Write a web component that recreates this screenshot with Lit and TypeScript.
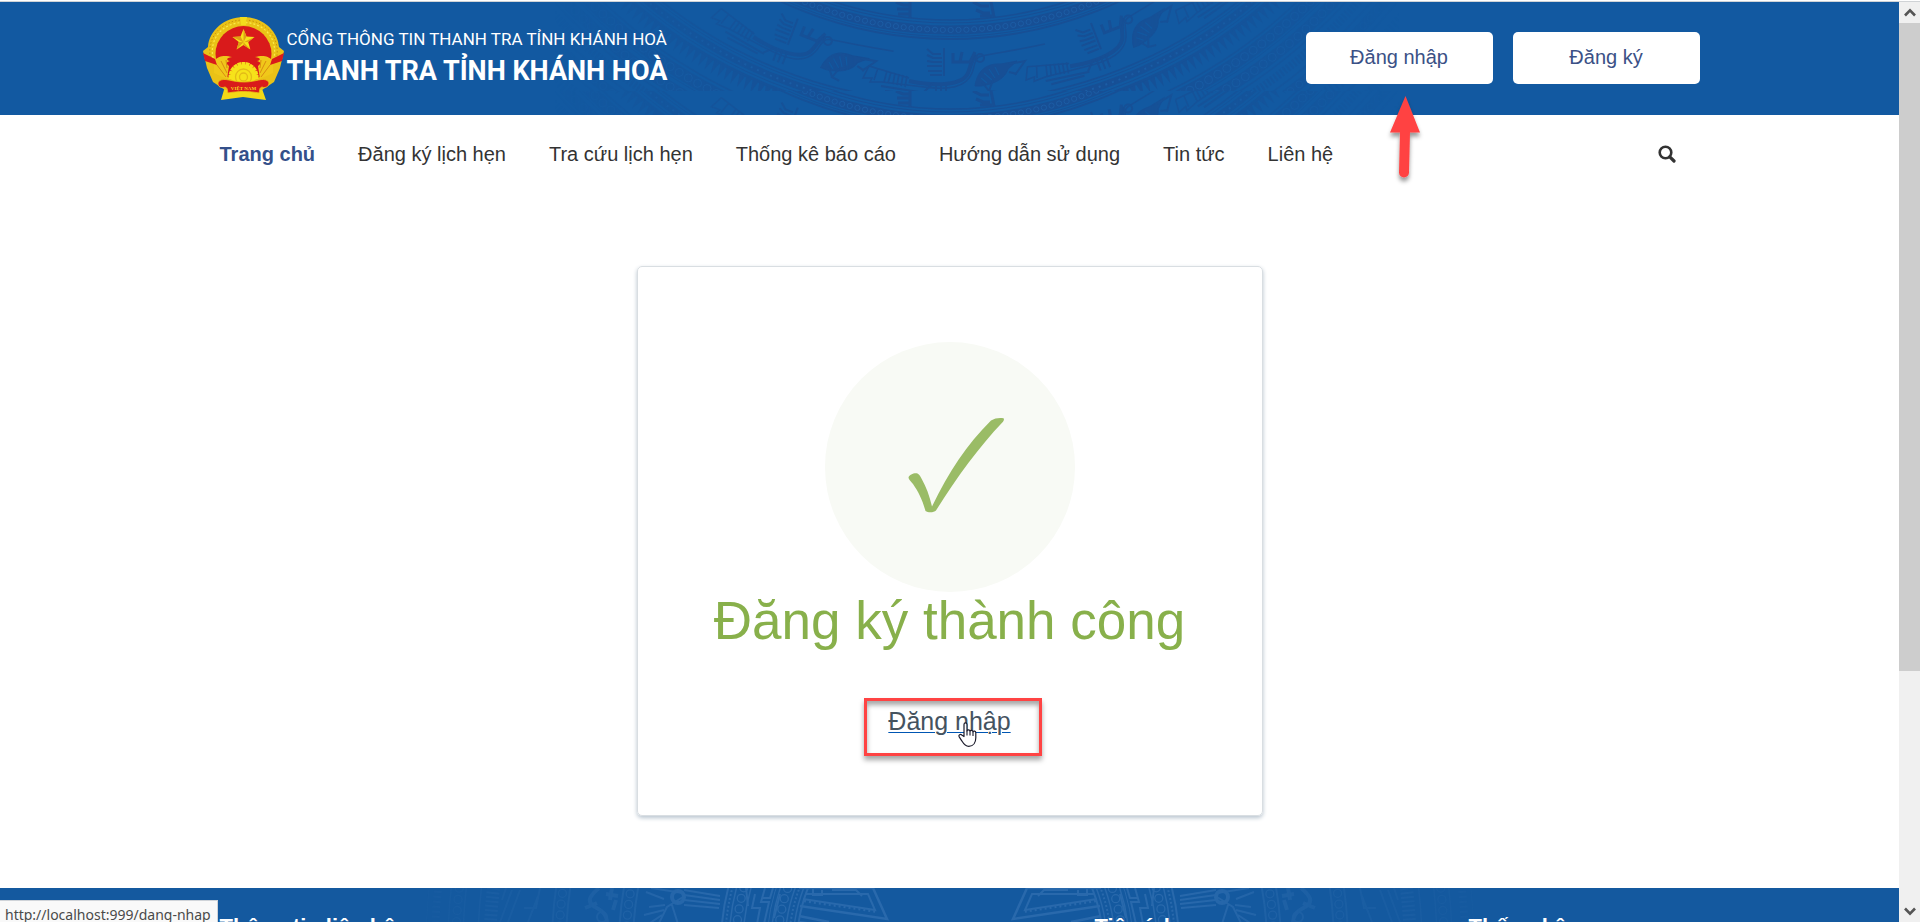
import { LitElement, html, svg, css } from "lit";
import { customElement } from "lit/decorators.js";
import { classMap } from "lit/directives/class-map.js";

const polar = (cx: number, cy: number, r: number, deg: number) => {
  const a = (deg * Math.PI) / 180;
  return [cx + r * Math.sin(a), cy + r * Math.cos(a)];
};
const range = (from: number, to: number, step: number) => {
  const out: number[] = [];
  for (let v = from; v <= to; v += step) out.push(v);
  return out;
};

/* Bronze-drum ornament behind the top banner */
@customElement("drum-banner")
class DrumBanner extends LitElement {
  static styles = css`
    :host { display: block; overflow: hidden; }
    .art { display: block; margin: 0 auto; }
  `;
  private ring(r: number, w: number, dash = "") {
    return svg`<circle cx="450" cy="-363" r=${r} stroke-width=${w} stroke-dasharray=${dash || "none"}/>`;
  }
  private coils(r: number, size: number, step: number, color: string) {
    return range(-62, 62, step).map((d) => {
      const [x, y] = polar(450, -363, r, d);
      return svg`<circle cx=${x.toFixed(1)} cy=${y.toFixed(1)} r=${size} stroke=${color} stroke-width="1"/>`;
    });
  }
  private spikes(r: number, len: number, step: number) {
    const d = range(-62, 62, step)
      .map((a) => {
        const p = [polar(450, -363, r, a - step / 2.4), polar(450, -363, r + len, a), polar(450, -363, r, a + step / 2.4)];
        return "M" + p.map((q) => q.map((n) => n.toFixed(1)).join(" ")).join("L") + "z";
      })
      .join("");
    return svg`<path d=${d} fill="#174f95" stroke="none"/>`;
  }
  private crane(angle: number) {
    return svg`<g transform="rotate(${angle} 450 -363)">
      <path stroke-width="1.5" d="M369 64l-6 12h9l-2 4h12M369 64l40 12M378 66l-4 12M382 80l42 5c24 3 42 1 48-14 3-7 2-16 10-17 14-3 30-5 63-12"/>
      <path stroke-width="4" d="M409 79c28 6 54 4 59-8 3-7 3-13 8-18"/>
      <path stroke-width="1.6" d="M387 69l-3 11M391 70l-3 11M395 71l-2 11M399 72l-2 11M403 73l-2 11M407 74l-2 11"/>
      <path stroke-width="2" d="M444 46v28M427 47l6 5h8M427 53l6 3h9M427 59l6 1h9M427 64h15M428 69h14M430 73h12"/>
      <path stroke-width="3" d="M453 51v9h17l5-10M462 50l-2 10"/>
      <circle cx="480" cy="56" r="4" stroke-width="2"/>
      <path stroke-width="2" d="M381 84l44 7M385 89l34 4M424 90l8-8M436 82v12M441 82v12M446 82v12"/>
    </g>`;
  }
  private chick(angle: number) {
    return svg`<g transform="rotate(${angle} 450 -363)">
      <path fill="#174f95" stroke-width="1" d="M475 84c2-14 10-23 26-22l16-3-9 8c-3 10-14 15-27 17z"/>
      <path stroke-width="2" d="M509 62l16-3-10 14M509 70l8 2M482 80l7 9M493 78l-4 11 8 1"/>
      <path stroke="#1259a1" stroke-width="1.2" d="M481 76l6 5M484 71l8 7M489 67l6 9M495 65l4 8"/>
    </g>`;
  }
  render() {
    const light = "#1c5da5";
    return html`<svg class="art" width="900" height="113" viewBox="0 0 900 113" aria-hidden="true">
      <defs>
        <linearGradient id="fade">
          <stop offset="0" stop-color="#fff" stop-opacity="0"/><stop offset=".06" stop-color="#fff" stop-opacity="0"/>
          <stop offset=".22" stop-color="#fff" stop-opacity=".45"/><stop offset=".4" stop-color="#fff"/>
          <stop offset=".66" stop-color="#fff"/><stop offset=".82" stop-color="#fff" stop-opacity=".5"/>
          <stop offset="1" stop-color="#fff" stop-opacity="0"/>
        </linearGradient>
        <mask id="soft"><rect width="900" height="113" fill="url(#fade)"/></mask>
        <clipPath id="tile"><rect width="900" height="89"/></clipPath>
        <g id="drum" fill="none" stroke="#174f95" clip-path="url(#tile)">
          ${this.ring(381, 1.5)}${this.ring(384, 1)}${this.ring(391, 9)}${this.coils(391, 2.6, 1.15, light)}
          ${this.ring(397.5, 1)}${this.ring(400, 1.8)}
          ${this.ring(463, 1.6)}${this.ring(466, 1)}${this.ring(472, 7)}
          <circle cx="450" cy="-363" r="472" stroke=${light} stroke-width="2" stroke-dasharray="2 5"/>
          ${this.ring(478, 1)}${this.ring(482, 3)}${this.spikes(483, 13, 0.85)}
          ${this.ring(502, 1.5)}${this.ring(511, 12)}${this.coils(511, 4, 1.2, light)}
          ${this.ring(519, 1)}${this.ring(528, 11)}${this.coils(528, 4, 1.2, light)}${this.ring(537, 1.5)}
          ${this.ring(546, 8, "2 2")}${this.ring(556, 1.5)}${this.ring(566, 10)}${this.coils(566, 3.4, 1.1, light)}
          ${this.ring(576, 1.5)}${this.ring(590, 12, "2 3")}${this.ring(602, 2)}${this.ring(618, 10, "3 2")}
          ${this.crane(0)}${this.crane(21)}${this.crane(-21)}${this.crane(-42)}
          ${this.chick(0)}${this.chick(20)}${this.chick(-21)}
          <path stroke-width="3" d="M396 0l7 3h6M397 7h12M398 12h12M410 0v16M473 0l8 4h8M476 8l7 3h7M480 14h12M491 0l3 15"/>
        </g>
      </defs>
      <g mask="url(#soft)"><use href="#drum"/><use href="#drum" y="89"/></g>
    </svg>`;
  }
}

/* Lighter ornament behind the footer, drawn once and mirrored */
@customElement("footer-art")
class FooterArt extends LitElement {
  static styles = css`
    :host { display: block; overflow: hidden; }
    .art { display: block; margin: 0 auto; }
  `;
  private ring(r: number, w: number, dash = "none") {
    return svg`<circle cx="570" cy="57" r=${r} stroke-width=${w} stroke-dasharray=${dash}/>`;
  }
  private chain(r: number, size: number, step: number) {
    return range(-100, -60, step).map((d) => {
      const [x, y] = polar(570, 57, r, d - 20);
      return svg`<circle cx=${x.toFixed(1)} cy=${y.toFixed(1)} r=${size} stroke-width="1.3"/>`;
    });
  }
  render() {
    return html`<svg class="art" width="1140" height="90" viewBox="0 0 1140 90" aria-hidden="true">
      <defs>
        <linearGradient id="fade">
          <stop offset="0" stop-color="#fff" stop-opacity="0"/><stop offset=".35" stop-color="#fff" stop-opacity=".5"/>
          <stop offset=".6" stop-color="#fff"/>
          <stop offset="1" stop-color="#fff"/>
        </linearGradient>
        <mask id="soft"><rect width="570" height="90" fill="url(#fade)"/></mask>
        <g id="half" fill="none" stroke="#2969ac" mask="url(#soft)">
          ${this.ring(153, 2)}${this.ring(157, 1.5)}${this.ring(161, 2, "2 2")}${this.ring(165, 1.5)}
          ${this.chain(172, 4, 3.6)}${this.ring(179, 1.5)}${this.ring(183, 1)}
          <path stroke-width="2" d="M385 0l-4 14h8l-5 22M393 0l-3 10h-7M375 6l-3 14h8l-3 16M400 6l-6 24M366 0l2 18"/>
          ${this.ring(207, 1.5)}${this.chain(214, 4, 2.9)}${this.ring(221, 1.5)}${this.ring(225, 2, "2 2")}${this.ring(229, 2)}
          <path stroke-width="2.5" d="M419 0h74l14 31-87-13M419 28l30 6M419 34l14 2"/>
          <path stroke-width="2" d="M426 6h62l7 16-72-11M433 1v6h9V2M452 2h24l6 6"/>
          <path stroke-width="2.4" stroke-dasharray="2 3" d="M424 13l74 11"/>
          <path stroke-width="2" d="M340 8l-36-6M340 12l-36-5M340 16l-36-4M339 20l-35-3M303 5l-32-5M303 9l-16 10-8 16M292 17l6 19M285 17l-16 2M284 22l-20 5M282 27l-12 8M266 4l18 7"/>
          <circle cx="298" cy="9" r="6" stroke-width="4"/>
          <g opacity=".8">
            ${this.ring(317, 2)}${this.chain(324, 4, 1.9)}${this.ring(331, 2)}
            <path stroke-width="4" d="M219 0c-8 7-14 13-4 19 10 5 12 10 12 16M226 6l12 2M232 0l-2 12M236 12l-3 10M205 20l12-5"/>
            <circle cx="222" cy="29" r="5" stroke-width="2"/>
            ${this.ring(384, 2)}${this.chain(391, 4, 1.6)}${this.ring(398, 2)}
            <path stroke-width="2" d="M160 0l-4 20h-12M132 2l-12 32M140 2l-12 32M126 0l-4 12M158 8l-10 26"/>
          </g>
          ${this.ring(460, 13, "2 2.4")}${this.ring(472, 1.5)}
          ${this.ring(487, 1.5)}${this.chain(494, 4, 1.3)}${this.ring(502, 1.5)}${this.ring(515, 8, "2 3")}${this.ring(524, 1)}
        </g>
      </defs>
      <use href="#half"/><use href="#half" transform="translate(1140 0) scale(-1 1)"/>
    </svg>`;
  }
}

/* National emblem */
@customElement("state-emblem")
class StateEmblem extends LitElement {
  static styles = css`
    :host { display: block; }
    .art { display: block; }
    .motto { font: 700 5px "Liberation Serif", serif; fill: #f5dc1a; }
  `;
  render() {
    const teeth = range(-90, 90, 18).map(
      (a) => svg`<rect x="41.500" y="47" width="4" height="5" fill="#f6e21a" transform="rotate(${a} 43.5 62)"/>`
    );
    return html`<svg class="art" width="87" height="87" viewBox="0 0 87 87" role="img" aria-label="Quốc huy Việt Nam">
      <path fill="#f3d916" d="M26 68l-5 17 22-3 23 3-6-17z"/>
      <path fill="#eac217" d="M43.500 2C63 2 78 16 79 32l5 4-4 17-6 14-12 8H25l-12-8-6-14-4-17 5-4C9 16 24 2 43.500 2z"/>
      <circle cx="43.500" cy="39" r="28" fill="#d91a1b"/>
      <path fill="none" stroke="#c7920f" stroke-width="1" stroke-dasharray="1.500 2" d="M11 46C5 22 22 5 43.500 5S82 22 76 46"/>
      <path fill="none" stroke="#fbe94a" stroke-width="1.200" stroke-dasharray="2 2" d="M13 43C9 22 24 7.500 43.500 7.500S78 22 74 43"/>
      <path fill="#f3dc1c" d="M40 2h7l-1 8h-5z"/>
      <path fill="#f0c81a" d="M14 46c6-7 13-5 18-4-6 1-6 3-2 4-4 1-4 3-1 5l-2 13-13-6zM73 46c-6-7-13-5-18-4 6 1 6 3 2 4 4 1 4 3 1 5l2 13 13-6z"/>
      <path fill="none" stroke="#d98b12" stroke-width="1" d="M17 50l9 12M21 46l6 12M26 45l1 8M70 50l-9 12M66 46l-6 12M61 45l-1 8"/>
      <path fill="#d91a1b" d="M3 38l12 6 2 6-12-4zM84 38l-12 6-2 6 12-4z"/>
      <path fill="#f6e21a" d="M43.500 14l3 7.600 8 .3-6.300 5 2.200 7.700-6.900-4.500-6.900 4.500 2.200-7.700-6.300-5 8-.3z"/>
      <path fill="#dfa016" d="M43.500 14v13.200l3-5.600zM54.500 21.900l-11 5.300 4.700-.3zM50.400 34.600l-6.900-7.400v2.900zM36.600 34.600l6.900-7.400-4.700-.3zM32.500 21.900l11 5.300-3-5.600z"/>
      ${teeth}
      <circle cx="43.500" cy="62" r="12.500" fill="#f6e21a"/>
      <circle cx="43.500" cy="62" r="8" fill="none" stroke="#e3bb18" stroke-width="1.300"/>
      <circle cx="43.500" cy="62" r="4" fill="none" stroke="#e3bb18" stroke-width="1.300"/>
      <path fill="#d91a1b" stroke="#eac217" stroke-width=".8" d="M19 66c6-4 12 1 25 1s18-5 24-1c3 4-2 8-6 6-3 1-2 3-3 6-10-2-21-2-31 0-1-3 0-5-3-6-5 2-9-2-6-6z"/>
      <text class="motto" x="43.500" y="75" text-anchor="middle">VIỆT NAM</text>
    </svg>`;
  }
}

@customElement("app-root")
class AppRoot extends LitElement {
  static styles = css`
    * { box-sizing: border-box; }
    :host {
      display: flex;
      flex-direction: column;
      height: 100vh;
      overflow: hidden;
      background: #fff;
      color: #333;
      font-family: "Liberation Sans", Arial, sans-serif;
      font-size: 20px;
    }
    a { color: inherit; text-decoration: none; }
    .edge { flex: none; height: 2px; border-bottom: 1px solid #d0d3d6; }
    .frame { flex: 1; min-height: 0; display: flex; }
    .page { flex: 1; min-width: 0; overflow: hidden; }
    .wrap { width: 100%; max-width: 1500px; margin: 0 auto; display: flex; align-items: center; }

    .banner { position: relative; background: #1259a1; padding: 13px 0; }
    .ornament { position: absolute; inset: 0; }
    .banner .wrap { position: relative; justify-content: space-between; }
    .brand { display: flex; align-items: center; color: #fff; font-family: Roboto, sans-serif; text-transform: uppercase; }
    .titles { padding-bottom: 4px; }
    .portal { margin: 0; font-size: 17px; line-height: 28px; }
    .name { margin: 0; font-size: 27px; font-weight: 700; line-height: 36px; }
    .actions { display: flex; gap: 20px; padding-bottom: 2px; }
    .slot { position: relative; }
    .btn {
      display: block; width: 187px; height: 52px; padding: 0; border: 0; border-radius: 5px;
      background: #fff; color: #3b5186; font: inherit; cursor: pointer;
    }
    .arrow { position: absolute; top: 62px; left: 79px; z-index: 2; }

    .menu { padding: 0 20px; height: 78px; }
    .links { display: flex; gap: 43px; margin: 0; padding: 0; list-style: none; line-height: 30px; }
    .active { color: #34508a; font-weight: 700; }
    .search { margin-left: auto; padding: 4px; border: 0; background: none; color: #333; display: flex; }

    .main { display: flex; justify-content: center; padding: 73px 20px 72px; }
    .card {
      width: 100%; max-width: 626px; padding: 75px; text-align: center;
      border: 1px solid #d9dee2; border-radius: 5px; box-shadow: 0 2px 4px #b8c4cf;
      display: flex; flex-direction: column; align-items: center;
    }
    .badge { width: 250px; height: 250px; border-radius: 50%; background: #f8faf5; }
    .badge svg { display: block; }
    .done { margin: 0 0 54px; color: #88b04b; font-size: 53px; font-weight: 400; line-height: 58px; white-space: nowrap; }
    .next { position: relative; padding-bottom: 2px; font-size: 25px; line-height: 34px; }
    .signin {
      color: #45535f; text-decoration: underline; text-decoration-color: #0056b3;
      text-decoration-thickness: 1px; text-underline-offset: 2px;
    }
    .marker {
      position: absolute; inset: -6px -31px -16px -24px; border: 3px solid #ff4343;
      box-shadow: 0 4px 5px #00000059, inset 0 4px 5px #00000059;
    }
    .pointer { position: absolute; top: 18px; left: 70px; }

    .footer { position: relative; height: 200px; background: #14599f; color: #fff; }
    .footer .wrap { position: relative; padding: 24px 20px; display: grid; grid-template-columns: 875fr 374fr 211fr; }
    .head { margin: 0; font-size: 22px; font-weight: 700; line-height: 30px; white-space: nowrap; }

    .scroll { flex: none; width: 21px; background: #f0f0f0; display: flex; flex-direction: column; }
    .step { height: 21px; display: grid; place-items: center; }
    .thumb { height: 648px; background: #cdcdcd; }
    .rest { flex: 1; }

    .status {
      position: fixed; left: 0; bottom: 0; height: 22px; padding: 0 6px 0 5px; overflow: hidden;
      background: #f9f9f9; border: solid #cfd3d8; border-width: 1px 1px 0 0; color: #4a4a4a;
      font: 14px/28px "Noto Sans", sans-serif; white-space: nowrap;
    }
  `;

  private links = ["Trang chủ", "Đăng ký lịch hẹn", "Tra cứu lịch hẹn", "Thống kê báo cáo", "Hướng dẫn sử dụng", "Tin tức", "Liên hệ"];
  private columns = ["Thông tin liên hệ", "Tiện ích", "Thống kê"];

  render() {
    return html`
      <div class="edge"></div>
      <div class="frame">
        <div class="page">
          <header class="banner">
            <drum-banner class="ornament"></drum-banner>
            <div class="wrap">
              <a class="brand" href="#">
                <state-emblem></state-emblem>
                <div class="titles">
                  <p class="portal">Cổng thông tin thanh tra tỉnh Khánh Hoà</p>
                  <p class="name">Thanh tra tỉnh Khánh Hoà</p>
                </div>
              </a>
              <div class="actions">
                <div class="slot">
                  <button class="btn" type="button">Đăng nhập</button>
                  <svg class="arrow" width="40" height="94" viewBox="0 0 40 94" aria-hidden="true">
                    <defs><filter id="drop" x="-30%" y="-10%" width="160%" height="130%">
                      <feDropShadow dx="0" dy="4" stdDeviation="2" flood-color="#000" flood-opacity=".4"/>
                    </filter></defs>
                    <path filter="url(#drop)" fill="#ff4343" d="M20.500 2L35 38.500H25L24 78.500a5 5 0 0 1-10 0L15 38.500H5z"/>
                  </svg>
                </div>
                <button class="btn" type="button">Đăng ký</button>
              </div>
            </div>
          </header>

          <nav class="wrap menu" aria-label="Chính">
            <ul class="links">
              ${this.links.map((t, i) => html`<li><a href="#" class=${classMap({ active: i === 0 })}>${t}</a></li>`)}
            </ul>
            <button class="search" type="button" aria-label="Tìm kiếm">
              <svg width="18" height="18" viewBox="0 0 18 18" fill="none" stroke="currentColor">
                <circle cx="7.500" cy="7.500" r="5.800" stroke-width="2.600"/>
                <path d="M11.800 11.800l4.200 4.200" stroke-width="3.200" stroke-linecap="round"/>
              </svg>
            </button>
          </nav>

          <main class="main">
            <section class="card">
              <div class="badge">
                <svg width="250" height="250" viewBox="0 0 250 250" aria-hidden="true">
                  <path fill="#9abc66" d="M83.500 135.500c1-3 6-5 9-4 2 .8 3 3.500 4.500 6 4 7 7.500 16 10 27 17-35 34-61 59-86 4-2.500 9-3 12.500-2.200.8 1 .5 2-.5 3.500C154 105 132 135 111 168.500c-2 2.200-8 2.400-10.500.5-3-11-7-19-12.500-27-2-2.500-4.500-4.500-4.500-6.500z"/>
                </svg>
              </div>
              <h1 class="done">Đăng ký thành công</h1>
              <div class="next">
                <a class="signin" href="#dang-nhap">Đăng nhập</a>
                <div class="marker"></div>
                <svg class="pointer" width="20" height="26" viewBox="0 0 20 26" aria-hidden="true">
                  <path fill="#fff" stroke="#1b1b2b" stroke-width="1.200" stroke-linejoin="round" d="M6 14.500V2.600c0-2.200 3-2.200 3 0V9c.3-1.600 2.800-1.500 3 .3 .5-1.300 2.700-1.100 3 .5.500-1.200 2.800-.8 2.800 1v5c0 4.500-2.300 8.500-7 8.500-4 0-5.500-3-7-5.500l-2.600-4c-1-1.900 1.200-3 2.600-1.800z"/>
                  <path stroke="#1b1b2b" stroke-width="1.100" d="M9 8.500v5M12 9.500v4M15 10v4"/>
                </svg>
              </div>
            </section>
          </main>

          <footer class="footer">
            <footer-art class="ornament"></footer-art>
            <div class="wrap">${this.columns.map((t) => html`<h2 class="head">${t}</h2>`)}</div>
          </footer>
        </div>
        <div class="scroll" aria-hidden="true">
          <div class="step"><svg width="12" height="9" viewBox="0 0 12 9"><path fill="none" stroke="#555" stroke-width="2.600" d="M1 7.500l5-5.200 5 5.200"/></svg></div>
          <div class="thumb"></div>
          <div class="rest"></div>
          <div class="step"><svg width="12" height="9" viewBox="0 0 12 9"><path fill="none" stroke="#555" stroke-width="2.600" d="M1 1.500l5 5.200 5-5.200"/></svg></div>
        </div>
      </div>
      <div class="status">http://localhost:999/dang-nhap</div>
    `;
  }
}
